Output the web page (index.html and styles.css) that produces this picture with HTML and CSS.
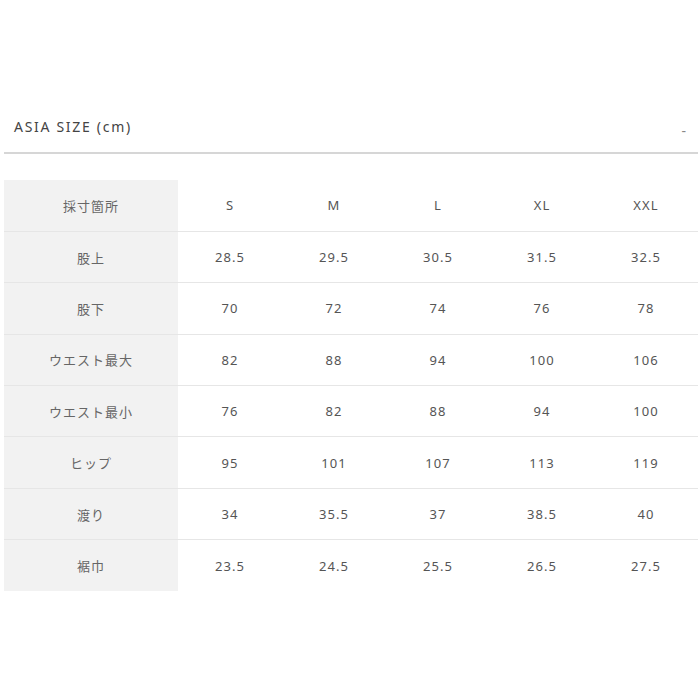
FILE: index.html
```html
<!DOCTYPE html>
<html lang="ja">
<head>
<meta charset="utf-8">
<link rel="stylesheet" href="styles.css">
</head>
<body>
<div class="panel">
  <div class="head">
    <span class="title">ASIA SIZE (cm)</span>
    <span class="toggle">-</span>
  </div>
  <table class="size">
    <tr><th>採寸箇所</th><td>S</td><td>M</td><td>L</td><td>XL</td><td>XXL</td></tr>
    <tr><th>股上</th><td>28.5</td><td>29.5</td><td>30.5</td><td>31.5</td><td>32.5</td></tr>
    <tr><th>股下</th><td>70</td><td>72</td><td>74</td><td>76</td><td>78</td></tr>
    <tr><th>ウエスト最大</th><td>82</td><td>88</td><td>94</td><td>100</td><td>106</td></tr>
    <tr><th>ウエスト最小</th><td>76</td><td>82</td><td>88</td><td>94</td><td>100</td></tr>
    <tr><th>ヒップ</th><td>95</td><td>101</td><td>107</td><td>113</td><td>119</td></tr>
    <tr><th>渡り</th><td>34</td><td>35.5</td><td>37</td><td>38.5</td><td>40</td></tr>
    <tr><th>裾巾</th><td>23.5</td><td>24.5</td><td>25.5</td><td>26.5</td><td>27.5</td></tr>
  </table>
</div>
</body>
</html>
```
FILE: styles.css
```css
html, body {
  margin: 0;
  padding: 0;
  background: #fff;
}
body {
  font-family: "Noto Sans", "Noto Sans CJK JP", sans-serif;
  color: #555;
}
.panel {
  padding: 105px 2px 0 4px;
}
.head {
  display: flex;
  align-items: center;
  justify-content: space-between;
  height: 47px;
  padding: 0 12px 0 10px;
  border-bottom: 2px solid #d6d6d6;
}
.title {
  font-size: 14px;
  letter-spacing: 1.7px;
  color: #444;
  margin-top: -4px;
}
.toggle {
  font-size: 14px;
  color: #888;
  margin-top: 4px;
}
.size {
  margin-top: 26px;
  width: 694px;
  border-collapse: collapse;
  table-layout: fixed;
}
.size tr {
  height: 51.4px;
}
.size tr + tr {
  border-top: 1px solid #e6e6e6;
}
.size th {
  width: 174px;
  background: #f2f2f2;
  font-weight: normal;
  font-size: 13px;
  letter-spacing: 1px;
  color: #666;
  text-align: center;
  padding: 0;
}
.size td {
  font-size: 13px;
  letter-spacing: 1.1px;
  color: #555;
  text-align: center;
  padding: 0;
}
```
